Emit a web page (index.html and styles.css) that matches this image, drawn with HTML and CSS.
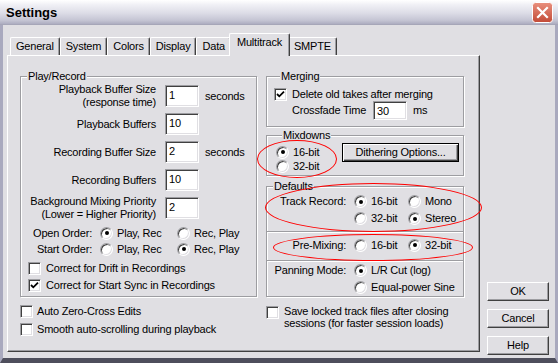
FILE: index.html
```html
<!DOCTYPE html>
<html lang="en">
<head>
  <meta charset="UTF-8">
  <title>Settings</title>
  <link rel="stylesheet" href="styles.css">
</head>
<body>
  <div class="window">
    <div class="titlebar">
      <span class="title">Settings</span>
      <span class="close">
        <svg width="21" height="21" viewBox="0 0 21 21">
          <defs>
            <linearGradient id="closeFill" x1="0" y1="0" x2="0" y2="1">
              <stop offset="0" stop-color="#e9907e"/>
              <stop offset="1" stop-color="#c24a36"/>
            </linearGradient>
          </defs>
          <rect x="0.5" y="0.5" width="20" height="20" rx="3" fill="url(#closeFill)" stroke="#fff"/>
          <path d="M6 6 L15 15 M15 6 L6 15" stroke="#fff" stroke-width="2.2" stroke-linecap="square"/>
        </svg>
      </span>
    </div>

    <div class="client">
      <div class="tabctl">
        <div class="tabstrip">
          <span class="tab">General</span>
          <span class="tab">System</span>
          <span class="tab">Colors</span>
          <span class="tab">Display</span>
          <span class="tab">Data</span>
          <span class="tab active">Multitrack</span>
          <span class="tab">SMPTE</span>
        </div>

        <div class="panel">
          <div class="columns">
            <fieldset class="group play">
              <legend>Play/Record</legend>
              <div class="field">
                <span class="flabel">Playback Buffer Size<br>(response time)</span>
                <span class="edit">1</span>
                <span class="unit">seconds</span>
              </div>
              <div class="field">
                <span class="flabel">Playback Buffers</span>
                <span class="edit">10</span>
              </div>
              <div class="field">
                <span class="flabel">Recording Buffer Size</span>
                <span class="edit">2</span>
                <span class="unit">seconds</span>
              </div>
              <div class="field">
                <span class="flabel">Recording Buffers</span>
                <span class="edit">10</span>
              </div>
              <div class="field">
                <span class="flabel">Background Mixing Priority<br>(Lower = Higher Priority)</span>
                <span class="edit">2</span>
              </div>

              <div class="orders">
                <div class="orow">
                  <span class="olabel">Open Order:</span>
                  <span class="opt wide"><i class="rb on"></i>Play, Rec</span>
                  <span class="opt"><i class="rb"></i>Rec, Play</span>
                </div>
                <div class="orow">
                  <span class="olabel">Start Order:</span>
                  <span class="opt wide"><i class="rb"></i>Play, Rec</span>
                  <span class="opt"><i class="rb on"></i>Rec, Play</span>
                </div>
              </div>

              <div class="checks">
                <div class="check"><i class="cb"></i>Correct for Drift in Recordings</div>
                <div class="check"><i class="cb on"><svg width="9" height="9" viewBox="0 0 9 9"><path d="M1 4 L3.3 6.3 L8 1.6" fill="none" stroke="#000" stroke-width="1.8"/></svg></i>Correct for Start Sync in Recordings</div>
              </div>
            </fieldset>

            <div class="rightcol">
              <fieldset class="group merging">
                <legend>Merging</legend>
                <div class="check"><i class="cb on"><svg width="9" height="9" viewBox="0 0 9 9"><path d="M1 4 L3.3 6.3 L8 1.6" fill="none" stroke="#000" stroke-width="1.8"/></svg></i>Delete old takes after merging</div>
                <div class="xfade">
                  <span class="xlabel">Crossfade Time</span>
                  <span class="edit small">30</span>
                  <span class="unit">ms</span>
                </div>
              </fieldset>

              <fieldset class="group mixdowns">
                <legend>Mixdowns</legend>
                <div class="mixrow">
                  <div class="radios">
                    <span class="opt"><i class="rb on"></i>16-bit</span>
                    <span class="opt"><i class="rb"></i>32-bit</span>
                  </div>
                  <span class="btn default">Dithering Options...</span>
                </div>
              </fieldset>

              <fieldset class="group defaults">
                <legend>Defaults</legend>
                <div class="dsec track">
                  <div class="drow">
                    <span class="dlabel">Track Record:</span>
                    <span class="opt dopt"><i class="rb on"></i>16-bit</span>
                    <span class="opt"><i class="rb"></i>Mono</span>
                  </div>
                  <div class="drow">
                    <span class="dlabel"></span>
                    <span class="opt dopt"><i class="rb"></i>32-bit</span>
                    <span class="opt"><i class="rb on"></i>Stereo</span>
                  </div>
                </div>
                <div class="dsec premix">
                  <div class="drow">
                    <span class="dlabel">Pre-Mixing:</span>
                    <span class="opt dopt"><i class="rb"></i>16-bit</span>
                    <span class="opt"><i class="rb on"></i>32-bit</span>
                  </div>
                </div>
                <div class="dsec panning">
                  <div class="drow">
                    <span class="dlabel">Panning Mode:</span>
                    <span class="opt"><i class="rb on"></i>L/R Cut (log)</span>
                  </div>
                  <div class="drow">
                    <span class="dlabel"></span>
                    <span class="opt"><i class="rb"></i>Equal-power Sine</span>
                  </div>
                </div>
              </fieldset>
            </div>
          </div>

          <div class="extras">
            <div class="extras-left">
              <div class="check"><i class="cb"></i>Auto Zero-Cross Edits</div>
              <div class="check"><i class="cb"></i>Smooth auto-scrolling during playback</div>
            </div>
            <div class="check save"><i class="cb"></i><span>Save locked track files after closing<br>sessions (for faster session loads)</span></div>
          </div>
        </div>
      </div>

      <div class="buttons">
        <span class="btn">OK</span>
        <span class="btn">Cancel</span>
        <span class="btn">Help</span>
      </div>
    </div>

    <!-- red annotation rings drawn over the dialog -->
    <div class="mark mark-mix"></div>
    <div class="mark mark-track"></div>
    <div class="mark mark-premix"></div>
  </div>
</body>
</html>
```

FILE: styles.css
```css
* {
  box-sizing: border-box;
}
body {
  margin: 0;
  font: 11px/13px "Liberation Sans", Arial, sans-serif;
  letter-spacing: -0.2px;
  color: #000;
  background: #e0dfe3;
}
.window {
  position: relative;
  width: 558px;
  height: 363px;
  overflow: hidden;
  display: flex;
  flex-direction: column;
  background: #e0dfe3;
}

/* title bar */
.titlebar {
  height: 25px;
  flex: none;
  display: flex;
  align-items: center;
  justify-content: space-between;
  padding: 0 5px 0 6px;
  background: linear-gradient(to bottom, #ffffff 0%, #f0f0f5 20%, #dcdce6 55%, #c4c4d3 85%, #adadc0 100%);
  border-bottom: 1px solid #a6a6b8;
}
.title {
  font: bold 13px "Liberation Sans", Arial, sans-serif;
  letter-spacing: 0;
  color: #000;
  padding-top: 1px;
}
.close {
  display: flex;
  padding-top: 1px;
}

/* dialog body */
.client {
  flex: 1;
  display: flex;
  padding: 8px 6px 0 4px;
  border-left: 3px solid #a9a9be;
  border-right: 3px solid #a9a9be;
  border-bottom: 5px solid #4e4e5c;
}
.tabctl {
  width: 473px;
  flex: none;
}
.tabstrip {
  display: flex;
  align-items: flex-end;
  height: 22px;
  padding-left: 3px;
}
.tab {
  height: 18px;
  padding: 0 5px;
  line-height: 16px;
  border: 1px solid;
  border-color: #fff #404040 #fff #fff;
  border-bottom: none;
  border-radius: 2px 2px 0 0;
  box-shadow: inset -1px 0 #9d9da1;
  background: #e0dfe3;
}
.tab.active {
  position: relative;
  z-index: 1;
  height: 23px;
  margin: 0 -2px -1px;
  padding: 0 7px;
}
.panel {
  height: 297px;
  padding: 14px 15px 0 12px;
  border: 1px solid;
  border-color: #fff #404040 #404040 #fff;
  box-shadow: inset -1px -1px #9d9da1;
}
.columns {
  display: grid;
  grid-template-columns: 237px 198px;
  column-gap: 9px;
}

/* group boxes */
.group {
  margin: 0;
  padding: 0;
  min-width: 0;
  border: 1px solid #9d9da1;
  box-shadow: inset 1px 1px #fff, 1px 1px #fff;
}
.group legend {
  margin-left: 6px;
  padding: 0 1px;
  background: #e0dfe3;
}

/* inputs and options */
.edit {
  width: 34px;
  height: 22px;
  flex: none;
  padding: 2px 3px;
  line-height: 14px;
  background: #fff;
  border: 1px solid;
  border-color: #9d9da1 #fff #fff #9d9da1;
  box-shadow: inset 1px 1px #404040, inset -1px -1px #e0dfe3;
}
.edit.small {
  height: 19px;
  padding: 2px 3px;
}
.unit {
  margin-left: 6px;
}
.rb {
  position: relative;
  width: 13px;
  height: 13px;
  flex: none;
  border-radius: 50%;
  background: #fff;
  border: 1px solid;
  border-color: #9d9da1 #fff #fff #9d9da1;
  box-shadow: inset 1px 1px #404040, inset -1px -1px #e0dfe3;
}
.rb.on::after {
  content: "";
  position: absolute;
  left: 3.5px;
  top: 3.5px;
  width: 4px;
  height: 4px;
  border-radius: 50%;
  background: #000;
}
.cb {
  width: 13px;
  height: 13px;
  flex: none;
  display: flex;
  align-items: center;
  justify-content: center;
  background: #fff;
  border: 1px solid;
  border-color: #9d9da1 #fff #fff #9d9da1;
  box-shadow: inset 1px 1px #404040, inset -1px -1px #e0dfe3;
}
.opt {
  display: inline-flex;
  align-items: center;
  gap: 4px;
}
.check {
  display: flex;
  align-items: center;
  gap: 5px;
  height: 17px;
}
.btn {
  display: flex;
  align-items: center;
  justify-content: center;
  height: 19px;
  background: #e0dfe3;
  border: 1px solid;
  border-color: #fff #404040 #404040 #fff;
  box-shadow: inset -1px -1px #9d9da1;
}
.btn.default {
  border-color: #000;
  box-shadow: inset 1px 1px #fff, inset -1px -1px #404040, inset -2px -2px #9d9da1;
}

/* play / record */
.play {
  padding: 2px 0 1px 0;
}
.field {
  display: flex;
  align-items: center;
  height: 22px;
  margin-bottom: 6px;
}
.field .edit {
  margin-left: 9px;
}
.flabel {
  width: 135px;
  text-align: right;
}
.orders {
  margin-top: 2px;
}
.orow {
  display: flex;
  align-items: center;
  height: 16px;
}
.olabel {
  width: 71px;
  margin-right: 8px;
  text-align: right;
}
.opt.wide {
  width: 77px;
}
.checks {
  margin-top: 3px;
  padding-left: 7px;
}

/* right column */
.rightcol {
  display: flex;
  flex-direction: column;
}
.merging {
  padding: 4px 0 6px 7px;
}
.merging .check {
  height: 14px;
}
.xfade {
  display: flex;
  align-items: center;
  height: 19px;
  padding-left: 18px;
}
.xlabel {
  width: 81px;
}
.mixdowns {
  margin-top: 2px;
  padding: 0 0 2px 9px;
}
.mixrow {
  display: flex;
  align-items: flex-start;
}
.radios {
  width: 66px;
  padding-top: 3px;
}
.radios .opt {
  display: flex;
  height: 14px;
}
.mixdowns .btn {
  width: 117px;
  margin-top: 1px;
}
.defaults {
  flex: 1;
  margin-top: 4px;
}
.dsec {
  padding-left: 1px;
}
.dsec.track {
  padding-bottom: 4px;
}
.dsec.premix,
.dsec.panning {
  border-top: 1px solid #9d9da1;
  box-shadow: inset 0 1px #fff;
}
.dsec.premix {
  padding: 6px 0 8px 1px;
}
.dsec.premix .drow {
  height: 14px;
}
.dsec.panning {
  padding-top: 1px;
}
.drow {
  display: flex;
  align-items: center;
  height: 17px;
}
.dlabel {
  width: 78px;
  margin-right: 8px;
  text-align: right;
}
.opt.dopt {
  width: 54px;
}

/* options under the group boxes */
.extras {
  display: grid;
  grid-template-columns: 237px 198px;
  column-gap: 9px;
  margin-top: 7px;
}
.extras-left {
  display: flex;
  flex-direction: column;
  gap: 4px;
}
.extras-left .check {
  height: 14px;
  gap: 4px;
}
.check.save {
  align-items: flex-start;
  height: auto;
  margin-top: 1px;
  line-height: 12px;
}
.check.save .cb {
  margin-top: 1px;
}

/* OK / Cancel / Help */
.buttons {
  width: 62px;
  margin-left: 7px;
  flex: none;
  display: flex;
  flex-direction: column;
  justify-content: flex-end;
  gap: 8px;
  padding-bottom: 3px;
}

/* annotation rings */
.mark {
  position: absolute;
  border: 1px solid #f00;
  border-radius: 50%;
  pointer-events: none;
}
.mark-mix {
  left: 257px;
  top: 140px;
  width: 80px;
  height: 38px;
}
.mark-track {
  left: 265px;
  top: 183px;
  width: 217px;
  height: 49px;
}
.mark-premix {
  left: 273px;
  top: 234px;
  width: 200px;
  height: 27px;
}
```
